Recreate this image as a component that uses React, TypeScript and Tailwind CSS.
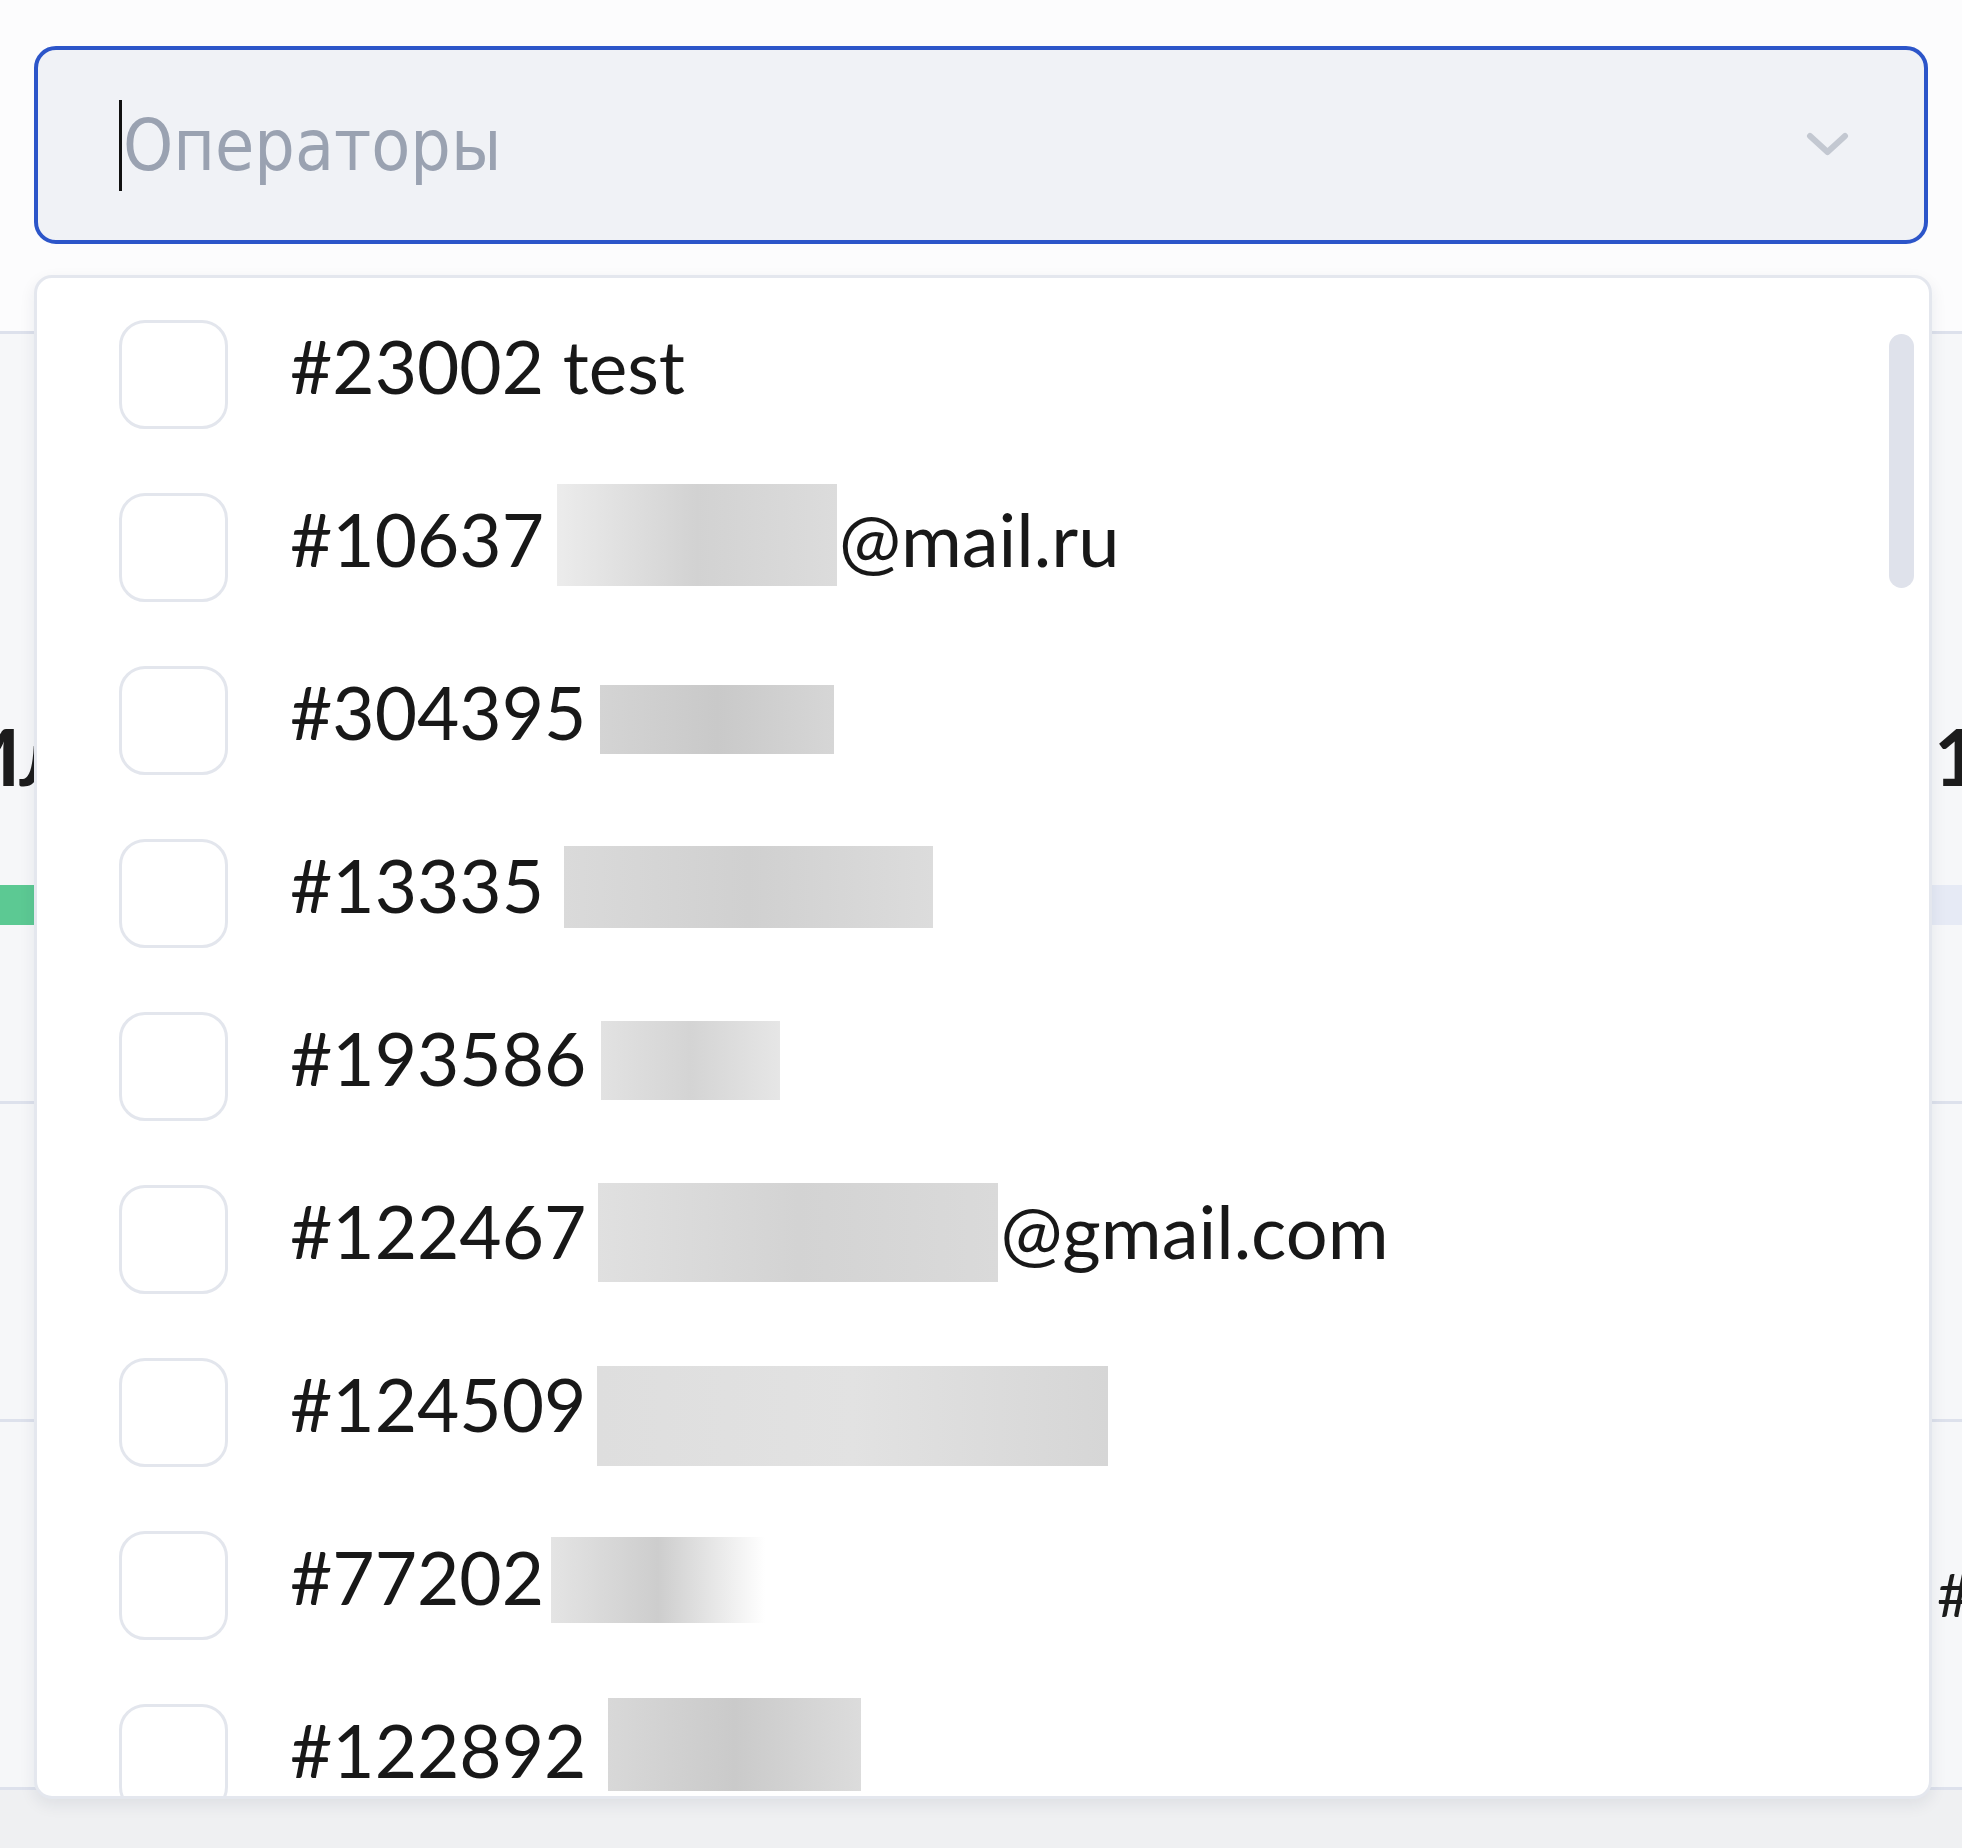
import React from "react";

type Item = {
  id: string;
  blur?: string;
  suffix?: string;
};

const items: Item[] = [
  { id: "#23002 test" },
  {
    id: "#10637",
    blur: "ml-[13px] w-[280px] h-[102px] mb-[26px] bg-gradient-to-r from-[#ececec] via-[#d2d2d2] to-[#dcdcdc]",
    suffix: "@mail.ru",
  },
  {
    id: "#304395",
    blur: "ml-[14px] w-[234px] h-[69px] mb-[2px] bg-gradient-to-r from-[#d4d4d4] via-[#c9c9c9] to-[#d6d6d6]",
  },
  {
    id: "#13335",
    blur: "ml-[20px] w-[369px] h-[82px] mb-[14px] bg-gradient-to-r from-[#dadada] via-[#d0d0d0] to-[#dcdcdc]",
  },
  {
    id: "#193586",
    blur: "ml-[15px] w-[179px] h-[79px] mb-[12px] bg-gradient-to-r from-[#e2e2e2] via-[#d4d4d4] to-[#e6e6e6]",
  },
  {
    id: "#122467",
    blur: "ml-[12px] w-[400px] h-[99px] mb-[14px] bg-gradient-to-r from-[#e0e0e0] via-[#d3d3d3] to-[#dadada]",
    suffix: "@gmail.com",
  },
  {
    id: "#124509",
    blur: "ml-[11px] w-[511px] h-[100px] mt-[6px] bg-gradient-to-r from-[#dedede] via-[#e2e2e2] to-[#d6d6d6]",
  },
  {
    id: "#77202",
    blur: "ml-[7px] w-[214px] h-[86px] mb-[12px] bg-gradient-to-r from-[#e4e4e4] via-[#cdcdcd] to-white",
  },
  {
    id: "#122892",
    blur: "ml-[22px] w-[253px] h-[93px] mb-[28px] bg-gradient-to-r from-[#d8d8d8] via-[#cacaca] to-[#dcdcdc]",
  },
];

const listFont = { fontFamily: "Lato, 'Noto Sans', sans-serif" };

function Row({ item }: { item: Item }) {
  return (
    <div className="flex h-[173px] shrink-0 items-center">
      <div className="h-[109px] w-[109px] shrink-0 rounded-[26px] border-[3px] border-[#e3e6ed] bg-white" />
      <span className="ml-[62px] pb-[16px] text-[73px] leading-[1.2] text-[#181818] whitespace-pre">
        {item.id}
      </span>
      {item.blur && <span className={"shrink-0 " + item.blur} />}
      {item.suffix && (
        <span className="ml-[2px] pb-[16px] text-[74px] leading-[1.2] text-[#181818] whitespace-pre">
          {item.suffix}
        </span>
      )}
    </div>
  );
}

export default function App() {
  return (
    <div
      className="relative h-[1848px] w-[1962px] overflow-hidden bg-[#eff0f2]"
      style={listFont}
    >
      {/* header with select */}
      <div className="h-[331px] bg-[#fcfcfd] px-[34px] pt-[46px]">
        <div className="flex h-[198px] items-center rounded-[22px] border-4 border-[#2c55c9] bg-[#f0f2f6] pl-[81px] pr-[75px]">
          <span className="h-[91px] w-[3px] shrink-0 bg-[#111]" />
          <span
            className="ml-[1px] text-[71px] leading-none text-[#9aa2b1]"
            style={{ fontFamily: "'DejaVu Sans Condensed', 'DejaVu Sans', sans-serif", fontStretch: "condensed" }}
          >
            Операторы
          </span>
          <div className="flex-1" />
          <svg width="43" height="26" viewBox="0 0 43 26" className="shrink-0">
            <polyline
              points="4,4 21.5,20 39,4"
              fill="none"
              stroke="#c3c8d1"
              strokeWidth="6"
              strokeLinecap="round"
              strokeLinejoin="round"
            />
          </svg>
        </div>
      </div>

      {/* table behind */}
      <div className="border-b-[3px] border-[#dde1ec] bg-[#f6f7f9]">
        <div className="flex h-[770px] flex-col border-t-[3px] border-[#dde1ec] pt-[376px]">
          <div className="flex text-[78px] font-bold leading-[1.2] text-[#1c1c1c]">
            <div className="w-[1934px] shrink-0">
              <span className="-ml-[40px] whitespace-pre">Илья</span>
            </div>
            <span className="whitespace-pre">12</span>
          </div>
          <div className="mt-[81px] flex h-[40px]">
            <div className="w-[900px] bg-[#5cc993]" />
            <div className="flex-1 bg-[#e6eaf5]" />
          </div>
        </div>
        <div className="h-[318px] border-t-[3px] border-[#dde1ec]" />
        <div className="flex h-[368px] border-t-[3px] border-[#dde1ec] pt-[136px]">
          <div className="w-[1937px] shrink-0" />
          <span className="text-[60px] leading-[1.2] text-[#1c1c1c]">#1</span>
        </div>
      </div>

      {/* dropdown panel */}
      <div className="absolute left-[34px] top-[275px] h-[1524px] w-[1898px] overflow-hidden rounded-[18px] border-[3px] border-[#e4e7ee] bg-white shadow-[0_6px_16px_rgba(30,40,60,0.08)]">
        <div className="flex flex-col pl-[82px] pt-[10px]">
          {items.map((it) => (
            <Row key={it.id} item={it} />
          ))}
        </div>
        <div className="absolute left-[1852px] top-[56px] h-[254px] w-[25px] rounded-full bg-[#dfe2eb]" />
      </div>
    </div>
  );
}
